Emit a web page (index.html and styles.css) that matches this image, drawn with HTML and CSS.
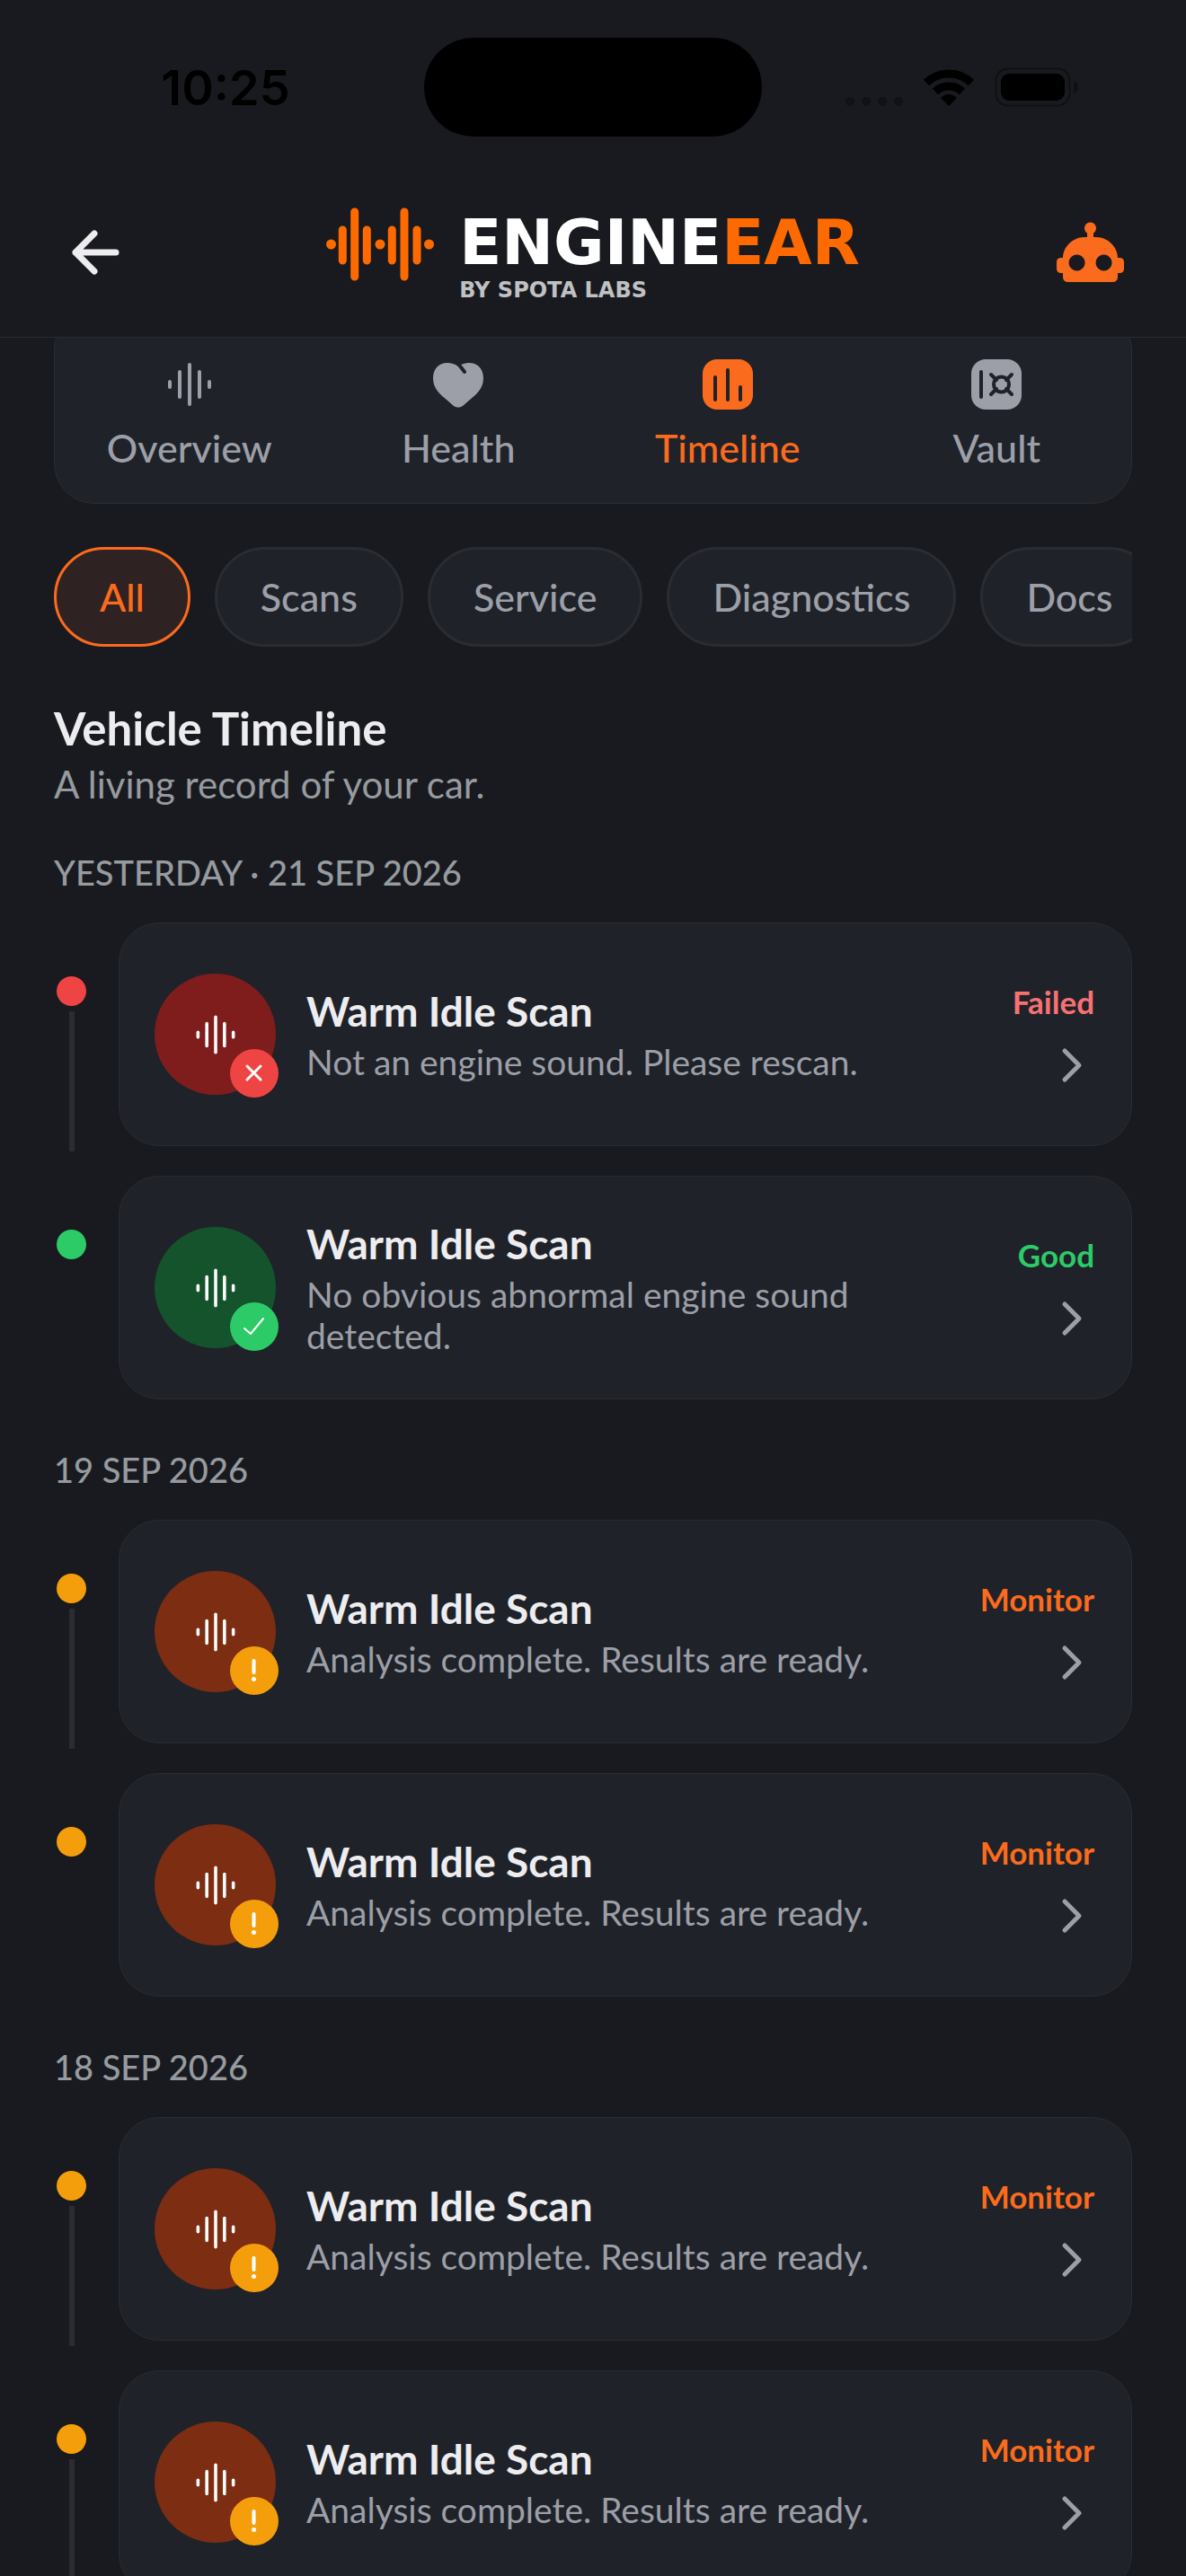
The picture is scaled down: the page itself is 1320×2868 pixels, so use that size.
FILE: index.html
```html
<!DOCTYPE html>
<html lang="en">
<head>
    <meta charset="UTF-8">
    <meta name="viewport" content="width=device-width, initial-scale=1.0">
    <title>EngineEar - Vehicle Timeline</title>
    <link rel="stylesheet" href="styles.css">
</head>
<body>

<!-- Shared icons -->
<svg class="sprite" aria-hidden="true">
    <symbol id="wave" viewBox="0 0 56 56">
        <path d="M6 25v6M17 14v28M28 6v44M39 14v28M50 25v6" fill="none" stroke="currentColor" stroke-width="4" stroke-linecap="round"/>
    </symbol>
    <symbol id="chevron" viewBox="0 0 50 50">
        <path d="M17 9l16 16-16 16" fill="none" stroke="currentColor" stroke-width="5" stroke-linecap="round" stroke-linejoin="round"/>
    </symbol>
    <symbol id="cross" viewBox="0 0 54 54">
        <path d="M19 19l15 15M34 19L19 34" fill="none" stroke="currentColor" stroke-width="3" stroke-linecap="round"/>
    </symbol>
    <symbol id="check" viewBox="0 0 54 54">
        <path d="M16 29l7 6 14-17" fill="none" stroke="currentColor" stroke-width="2" stroke-linecap="round" stroke-linejoin="round"/>
    </symbol>
    <symbol id="alert" viewBox="0 0 54 54">
        <path d="M26.500 16v13" fill="none" stroke="currentColor" stroke-width="4" stroke-linecap="round"/>
        <circle cx="26.500" cy="36.500" r="2.500" fill="currentColor"/>
    </symbol>
</svg>

<div class="app">
    <header class="header">
        <div class="status-bar">
            <span class="clock">10:25</span>
            <span class="island"></span>
            <div class="status-icons">
                <svg width="64" height="12" viewBox="0 0 64 12" fill="#111216"><circle cx="5" cy="6" r="5"/><circle cx="23" cy="6" r="5"/><circle cx="41" cy="6" r="5"/><circle cx="59" cy="6" r="5"/></svg>
                <svg class="wifi" width="58" height="44" viewBox="0 0 58 44">
                    <path d="M4 17A36 36 0 0 1 54 17M14 27A22 22 0 0 1 44 27" fill="none" stroke="#000" stroke-width="9"/>
                    <path d="M29 43l-9-9q9-8 18 0z"/>
                </svg>
                <svg width="94" height="44" viewBox="0 0 94 44">
                    <rect x="1.500" y="1.500" width="82" height="41" rx="13" fill="none" stroke="#0f1013" stroke-width="2"/>
                    <rect x="7" y="7" width="71" height="30" rx="9"/>
                    <path d="M88 15q5 2 5 7t-5 7z" fill="#0f1013"/>
                </svg>
            </div>
        </div>
        <div class="top-row">
            <button class="icon-btn" aria-label="Back">
                <svg width="54" height="50" viewBox="0 0 54 50"><path d="M49 25H4M25 4L4 25l21 21" fill="none" stroke="currentColor" stroke-width="7" stroke-linecap="round" stroke-linejoin="round"/></svg>
            </button>
            <div class="logo">
                <svg width="120" height="82" viewBox="0 0 120 82" fill="none" stroke="#ff6a00" stroke-width="9" stroke-linecap="round">
                    <path d="M18.300 25v34M31.700 5v72M45.300 25v34M73.300 25v34M87 5v72M101 25v34"/>
                    <g fill="#ff6a00" stroke="none"><circle cx="5.500" cy="41" r="5.500"/><circle cx="60" cy="41" r="5.500"/><circle cx="114.500" cy="41" r="5.500"/></g>
                </svg>
                <div class="logo-text">
                    <span class="brand">ENGINE<span class="ear">EAR</span></span>
                    <span class="by">BY SPOTA LABS</span>
                </div>
            </div>
            <button class="icon-btn bot" aria-label="Assistant">
                <svg width="75" height="67" viewBox="0 0 75 67">
                    <path fill="currentColor" fill-rule="evenodd" d="M41 12.500V17H44C57 17 68 28 68 40H70Q75 40 75 45V52Q75 57 70 57H68V61Q68 67 62 67H13Q7 67 7 61V57H5Q0 57 0 52V45Q0 40 5 40H7C7 28 18 17 31 17H34V12.500A6.500 6.500 0 1 1 41 12.500ZM22.500 36.500a9 9 0 1 0 .1 0zM52.500 36.500a9 9 0 1 0 .1 0z"/>
                </svg>
            </button>
        </div>
    </header>

    <main class="content">
        <nav class="tabs">
            <button class="tab">
                <svg width="56" height="56"><use href="#wave"/></svg>
                <span>Overview</span>
            </button>
            <button class="tab">
                <svg width="56" height="56" viewBox="0 0 56 56">
                    <path fill="currentColor" d="M28 8C24 5 20 4 16 4 6 4 0 11 0 21c0 12 8 18 15 24 4 3 7 7 10 8q3 1 6 0c3-1 6-5 10-8 7-6 15-12 15-24C56 11 50 4 40 4 36 4 32 5 28 8z"/>
                    <path d="M28 5l7 9" fill="none" stroke="#1f2229" stroke-width="4" stroke-linecap="round"/>
                </svg>
                <span>Health</span>
            </button>
            <button class="tab active">
                <svg width="56" height="56" viewBox="0 0 56 56">
                    <rect width="56" height="56" rx="16" fill="currentColor"/>
                    <path d="M14 20v25M28 12v33M42 31v14" fill="none" stroke="#1f2229" stroke-width="4" stroke-linecap="round"/>
                </svg>
                <span>Timeline</span>
            </button>
            <button class="tab">
                <svg width="56" height="56" viewBox="0 0 56 56">
                    <rect width="56" height="56" rx="16" fill="currentColor"/>
                    <g fill="none" stroke="#1f2229" stroke-width="4" stroke-linecap="round"><path d="M11 14v28M22 17l6 6M45 17l-6 6M22 39l6-6M45 39l-6-6"/><circle cx="33.500" cy="28" r="8.500"/></g>
                </svg>
                <span>Vault</span>
            </button>
        </nav>

        <div class="chips">
            <button class="chip selected">All</button>
            <button class="chip">Scans</button>
            <button class="chip">Service</button>
            <button class="chip">Diagnostics</button>
            <button class="chip">Docs</button>
        </div>

        <h1>Vehicle Timeline</h1>
        <p class="subtitle">A living record of your car.</p>

        <section class="day">
            <h2>YESTERDAY · 21 SEP 2026</h2>
            <div class="entry failed">
                <div class="rail"></div>
                <a class="card" href="#">
                    <span class="avatar"><svg width="50" height="50"><use href="#wave"/></svg><svg class="badge"><use href="#cross"/></svg></span>
                    <span class="info">
                        <strong>Warm Idle Scan</strong>
                        <span class="desc">Not an engine sound. Please rescan.</span>
                    </span>
                    <span class="result"><b>Failed</b><svg width="50" height="50"><use href="#chevron"/></svg></span>
                </a>
            </div>
            <div class="entry good last">
                <div class="rail"></div>
                <a class="card" href="#">
                    <span class="avatar"><svg width="50" height="50"><use href="#wave"/></svg><svg class="badge"><use href="#check"/></svg></span>
                    <span class="info">
                        <strong>Warm Idle Scan</strong>
                        <span class="desc">No obvious abnormal engine sound detected.</span>
                    </span>
                    <span class="result"><b>Good</b><svg width="50" height="50"><use href="#chevron"/></svg></span>
                </a>
            </div>
        </section>

        <section class="day">
            <h2>19 SEP 2026</h2>
            <div class="entry monitor">
                <div class="rail"></div>
                <a class="card" href="#">
                    <span class="avatar"><svg width="50" height="50"><use href="#wave"/></svg><svg class="badge"><use href="#alert"/></svg></span>
                    <span class="info">
                        <strong>Warm Idle Scan</strong>
                        <span class="desc">Analysis complete. Results are ready.</span>
                    </span>
                    <span class="result"><b>Monitor</b><svg width="50" height="50"><use href="#chevron"/></svg></span>
                </a>
            </div>
            <div class="entry monitor last">
                <div class="rail"></div>
                <a class="card" href="#">
                    <span class="avatar"><svg width="50" height="50"><use href="#wave"/></svg><svg class="badge"><use href="#alert"/></svg></span>
                    <span class="info">
                        <strong>Warm Idle Scan</strong>
                        <span class="desc">Analysis complete. Results are ready.</span>
                    </span>
                    <span class="result"><b>Monitor</b><svg width="50" height="50"><use href="#chevron"/></svg></span>
                </a>
            </div>
        </section>

        <section class="day">
            <h2>18 SEP 2026</h2>
            <div class="entry monitor">
                <div class="rail"></div>
                <a class="card" href="#">
                    <span class="avatar"><svg width="50" height="50"><use href="#wave"/></svg><svg class="badge"><use href="#alert"/></svg></span>
                    <span class="info">
                        <strong>Warm Idle Scan</strong>
                        <span class="desc">Analysis complete. Results are ready.</span>
                    </span>
                    <span class="result"><b>Monitor</b><svg width="50" height="50"><use href="#chevron"/></svg></span>
                </a>
            </div>
            <div class="entry monitor">
                <div class="rail"></div>
                <a class="card" href="#">
                    <span class="avatar"><svg width="50" height="50"><use href="#wave"/></svg><svg class="badge"><use href="#alert"/></svg></span>
                    <span class="info">
                        <strong>Warm Idle Scan</strong>
                        <span class="desc">Analysis complete. Results are ready.</span>
                    </span>
                    <span class="result"><b>Monitor</b><svg width="50" height="50"><use href="#chevron"/></svg></span>
                </a>
            </div>
        </section>
    </main>
</div>

</body>
</html>
```

FILE: styles.css
```css
* {
    box-sizing: border-box;
}
body {
    margin: 0;
    background-color: #191a1f;
    color: #ededef;
    font-family: Lato, "Open Sans", sans-serif;
}
button {
    font-family: inherit;
    cursor: pointer;
}
svg {
    display: block;
    flex-shrink: 0;
}
.sprite {
    display: none;
}
.app {
    display: flex;
    flex-direction: column;
    height: 100vh;
    overflow: hidden;
}

/* Header */
.header {
    position: relative;
    z-index: 2;
    flex-shrink: 0;
    background-color: #191a1f;
    border-bottom: 1px solid #2a2c33;
}
.status-bar {
    display: grid;
    grid-template-columns: 1fr auto 1fr;
    align-items: center;
    height: 194px;
    color: #000;
}
.clock {
    justify-self: center;
    padding-left: 30px;
    font-family: Inter, sans-serif;
    font-size: 54px;
    font-weight: 600;
}
.island {
    width: 376px;
    height: 110px;
    border-radius: 55px;
    background-color: #000;
}
.status-icons {
    display: flex;
    align-items: flex-end;
    justify-content: flex-end;
    gap: 22px;
    padding-right: 119px;
}
.top-row {
    display: flex;
    align-items: center;
    justify-content: space-between;
    height: 181px;
    padding: 0 69px 8px 80px;
}
.icon-btn {
    display: flex;
    width: 64px;
    padding: 0;
    border: none;
    background: none;
    color: #ededef;
}
.icon-btn.bot {
    width: 75px;
    color: #fb6b1d;
}
.logo {
    display: flex;
    gap: 28px;
    height: 100px;
}
.logo-text {
    display: flex;
    flex-direction: column;
    font-family: "DejaVu Sans", sans-serif;
}
.brand {
    color: #fff;
    font-size: 69px;
    font-weight: 700;
    line-height: 78px;
}
.ear {
    color: #ff6a00;
}
.by {
    color: #c0c1c3;
    font-size: 24px;
    font-weight: 700;
    line-height: 28px;
}

/* Content */
.content {
    flex: 1;
    min-height: 0;
    overflow: hidden;
    padding: 0 60px;
}
.tabs {
    display: grid;
    grid-template-columns: repeat(4, 1fr);
    margin-top: -32px;
    padding: 55px 0 36px;
    border: 1px solid #2a2c33;
    border-radius: 45px;
    background-color: #1f2229;
}
.tab {
    display: flex;
    flex-direction: column;
    align-items: center;
    gap: 18px;
    padding: 0;
    border: none;
    background: none;
    color: #9c9fa7;
    font-family: "Lato Medium", Lato, sans-serif;
    font-size: 43px;
    font-weight: 500;
    line-height: 50px;
}
.tab.active {
    color: #fb6b1d;
}
.chips {
    display: flex;
    gap: 27px;
    margin-top: 48px;
    overflow: hidden;
}
.chip {
    flex-shrink: 0;
    height: 111px;
    padding: 0 48px;
    border: 3px solid #2a2c33;
    border-radius: 56px;
    background-color: #1f2229;
    color: #9c9fa7;
    font-family: "Lato Medium", Lato, sans-serif;
    font-size: 43px;
    font-weight: 500;
}
.chip.selected {
    border-color: #fb6b1d;
    background-color: #2f2222;
    color: #fb6b1d;
}
h1 {
    margin: 60px 0 0;
    font-size: 51px;
    font-weight: 700;
    line-height: 62px;
}
.subtitle {
    margin: 4px 0 0;
    color: #969b9f;
    font-size: 42px;
    line-height: 54px;
}
.day {
    margin-top: 46px;
}
h2 {
    margin: 0 0 31px;
    color: #969b9f;
    font-family: "Lato Medium", Lato, sans-serif;
    font-size: 38px;
    font-weight: 500;
    line-height: 50px;
}
.day + .day {
    margin-top: 53px;
}

/* Timeline entries */
.entry {
    --dot: #f59e0b;
    --tint: #7c2d12;
    --label: #fb6b1d;
    display: flex;
    gap: 33px;
}
.entry + .entry {
    margin-top: 33px;
}
.entry.failed {
    --dot: #ef4444;
    --tint: #7f1d1d;
    --label: #f87171;
}
.entry.good {
    --dot: #2dcb68;
    --tint: #15532d;
    --label: #2dcb68;
}
.rail {
    display: flex;
    flex-direction: column;
    align-items: center;
    gap: 6px;
    width: 39px;
    padding-top: 60px;
    margin-bottom: -6px;
}
.rail::before {
    content: "";
    width: 33px;
    height: 33px;
    border-radius: 50%;
    background-color: var(--dot);
}
.rail::after {
    content: "";
    flex: 1;
    width: 6px;
    background-color: #2a2c33;
}
.last .rail::after {
    display: none;
}
.card {
    display: flex;
    align-items: center;
    flex: 1;
    gap: 34px;
    min-height: 249px;
    padding: 24px 41px 24px 39px;
    border: 1px solid #2a2c33;
    border-radius: 45px;
    background-color: #1f2229;
    color: inherit;
    text-decoration: none;
}
.avatar {
    position: relative;
    display: flex;
    align-items: center;
    justify-content: center;
    flex-shrink: 0;
    width: 135px;
    height: 135px;
    border-radius: 50%;
    background-color: var(--tint);
    color: #fff;
}
.badge {
    position: absolute;
    right: -3px;
    bottom: -3px;
    width: 54px;
    height: 54px;
    border-radius: 50%;
    background-color: var(--dot);
}
.info {
    display: flex;
    flex-direction: column;
    flex: 1;
    gap: 6px;
}
.info strong {
    font-size: 46px;
    font-weight: 700;
    line-height: 54px;
}
.desc {
    color: #9c9fa7;
    font-size: 39px;
    line-height: 46px;
}
.result {
    display: flex;
    flex-direction: column;
    align-items: flex-end;
    gap: 24px;
    min-width: 126px;
    color: #9c9fa7;
}
.result b {
    color: var(--label);
    font-size: 35px;
    line-height: 44px;
}
```
